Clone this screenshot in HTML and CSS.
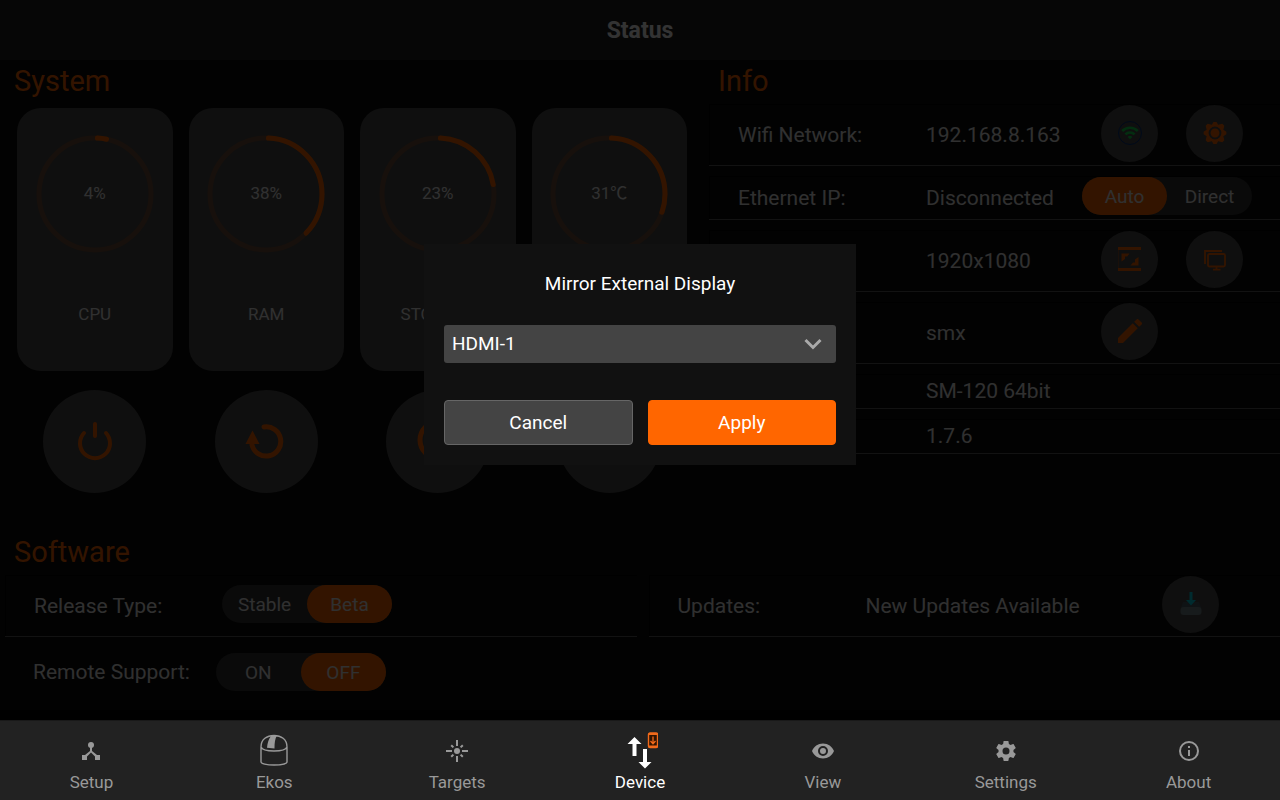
FILE: index.html
```html
<!DOCTYPE html>
<html lang="en">
<head>
<meta charset="utf-8">
<meta name="viewport" content="width=device-width, initial-scale=1">
<title>Status</title>
<link rel="stylesheet" href="styles.css">
</head>
<body>
<div class="app">
  <div class="screen">
    <header class="titlebar"><h1>Status</h1></header>
    <main class="content">
      <div class="overview">
        <section class="system">
          <h2>System</h2>
          <div class="gauges">
            <article class="gauge">
              <div class="dial">
                <svg viewBox="0 0 118 118" aria-hidden="true"><circle class="track" cx="59" cy="59" r="56"/><circle class="value" cx="59" cy="59" r="56" pathLength="100" stroke-dasharray="2.6 200"/></svg>
                <span>4%</span>
              </div>
              <h3>CPU</h3>
            </article>
            <article class="gauge">
              <div class="dial">
                <svg viewBox="0 0 118 118" aria-hidden="true"><circle class="track" cx="59" cy="59" r="56"/><circle class="value" cx="59" cy="59" r="56" pathLength="100" stroke-dasharray="36.6 200"/></svg>
                <span>38%</span>
              </div>
              <h3>RAM</h3>
            </article>
            <article class="gauge">
              <div class="dial">
                <svg viewBox="0 0 118 118" aria-hidden="true"><circle class="track" cx="59" cy="59" r="56"/><circle class="value" cx="59" cy="59" r="56" pathLength="100" stroke-dasharray="21.6 200"/></svg>
                <span>23%</span>
              </div>
              <h3>STORAGE</h3>
            </article>
            <article class="gauge">
              <div class="dial">
                <svg viewBox="0 0 118 118" aria-hidden="true"><circle class="track" cx="59" cy="59" r="56"/><circle class="value" cx="59" cy="59" r="56" pathLength="100" stroke-dasharray="29.6 200"/></svg>
                <span>31℃</span>
              </div>
            </article>
          </div>
          <div class="power">
            <button class="round large" aria-label="Power off">
              <svg viewBox="0 0 44 44" width="44" height="44" fill="none" stroke="currentColor" stroke-width="4" stroke-linecap="round"><path d="M22 4v12"/><path d="M11 13a15 15 0 1 0 22 0"/></svg>
            </button>
            <button class="round large" aria-label="Restart">
              <svg viewBox="0 0 44 44" width="44" height="44"><path d="M20 7a14.600 14.600 0 1 1-12 18" fill="none" stroke="currentColor" stroke-width="5" stroke-linecap="round"/><path d="M8.500 10.500L1.500 24h14z" fill="currentColor"/></svg>
            </button>
            <button class="round large" aria-label="Reload">
              <svg viewBox="0 0 44 44" width="44" height="44" fill="none" stroke="currentColor" stroke-width="5"><circle cx="22" cy="20" r="18"/></svg>
            </button>
            <button class="round large" aria-label="More"></button>
          </div>
        </section>

        <section class="info">
          <h2>Info</h2>
          <div class="rows">
            <div class="row tall">
              <span class="label">Wifi Network:</span><span class="text">192.168.8.163</span>
              <div class="actions">
                <button class="round" aria-label="Wifi">
                  <svg viewBox="0 0 26 26" width="26" height="26" fill="none"><circle cx="13" cy="13" r="11.500" stroke="#003080"/><g stroke="#10e050" stroke-width="2.600"><path d="M5.200 11a11 11 0 0 1 15.600 0"/><path d="M8.400 14.400a6.500 6.500 0 0 1 9.200 0"/></g><path d="M10.600 16.900a3.400 3.400 0 0 1 4.800 0L13 19.300z" fill="#10e050"/></svg>
                </button>
                <button class="round" aria-label="Hotspot">
                  <svg viewBox="0 0 24 24" width="26" height="26"><path fill="currentColor" d="M10.600 1.800h2.800l1.500 2.500 3.900-.9 1.800 1.800-.9 3.900 2.800 1.700v2.400l-2.800 1.700.9 3.900-1.800 1.800-3.900-.9-1.500 2.500h-2.800l-1.500-2.500-3.900.9-1.800-1.800.9-3.900-2.800-1.700v-2.400l2.800-1.700-.9-3.900 1.800-1.800 3.900.9z"/><circle cx="12" cy="12" r="5" fill="none" stroke="#4b4b4b" stroke-width="1.800"/></svg>
                </button>
              </div>
            </div>
            <div class="row medium">
              <span class="label">Ethernet IP:</span><span class="text">Disconnected</span>
              <div class="switch" role="radiogroup" aria-label="Ethernet mode">
                <label><input type="radio" name="eth" checked><span>Auto</span></label>
                <label><input type="radio" name="eth"><span>Direct</span></label>
              </div>
            </div>
            <div class="row tall">
              <span class="label"></span><span class="text">1920x1080</span>
              <div class="actions">
                <button class="round" aria-label="Change resolution">
                  <svg viewBox="0 0 24 24" width="24" height="24" fill="currentColor"><path d="M0 0h23v3H0zM0 21h23v3H0z"/><path d="M.500 3v18" stroke="currentColor" stroke-opacity=".3"/><path d="M3.500 6.500h8L9.200 9.500H7v2.500L3.500 14.500zM20.500 10v8.500h-8L15 15.500h2v-3z"/></svg>
                </button>
                <button class="round" aria-label="Mirror display">
                  <svg viewBox="0 0 24 24" width="24" height="24" fill="none" stroke="currentColor" stroke-width="1.800"><path d="M19 4H2v13"/><rect x="5" y="7" width="17" height="12.500" rx="1.500"/><path d="M13.500 19.500v3M10 22.600h7.500"/></svg>
                </button>
              </div>
            </div>
            <div class="row tall">
              <span class="label"></span><span class="text">smx</span>
              <div class="actions">
                <button class="round" aria-label="Edit">
                  <svg viewBox="3 3 18 18" width="24" height="24" fill="currentColor"><path d="M3 17.250V21h3.750L17.810 9.940l-3.750-3.750zM20.710 7.040a1 1 0 0 0 0-1.410l-2.340-2.340a1 1 0 0 0-1.410 0l-1.830 1.830 3.750 3.750z"/></svg>
                </button>
              </div>
            </div>
            <div class="row"><span class="label"></span><span class="text">SM-120 64bit</span></div>
            <div class="row"><span class="label"></span><span class="text">1.7.6</span></div>
          </div>
        </section>
      </div>

      <section class="software">
        <h2>Software</h2>
        <div class="pair">
          <div class="row tall">
            <span class="label">Release Type:</span>
            <div class="switch" role="radiogroup" aria-label="Release type">
              <label><input type="radio" name="release"><span>Stable</span></label>
              <label><input type="radio" name="release" checked><span>Beta</span></label>
            </div>
          </div>
          <div class="row tall updates">
            <span class="label">Updates:</span><span class="text">New Updates Available</span>
            <button class="round" aria-label="Download updates">
              <svg viewBox="0 0 24 24" width="24" height="24"><path d="M4 10h16l2 6H2z" fill="#4b5f68"/><rect x="1.500" y="15" width="21" height="8" rx="3" fill="#74858a"/><path d="M10.500 0h3v8H17l-5 5.500L7 8h3.500z" fill="#00d5e8"/></svg>
            </button>
          </div>
        </div>
        <div class="support">
          <span class="label">Remote Support:</span>
          <div class="switch" role="radiogroup" aria-label="Remote support">
            <label><input type="radio" name="support"><span>ON</span></label>
            <label><input type="radio" name="support" checked><span>OFF</span></label>
          </div>
        </div>
      </section>
    </main>

    <div class="scrim">
      <form class="dialog" role="dialog" aria-labelledby="dialog-title">
        <h2 id="dialog-title">Mirror External Display</h2>
        <div class="select">
          <select aria-labelledby="dialog-title"><option>HDMI-1</option></select>
          <svg viewBox="0 0 18 12" width="18" height="12" fill="none" stroke="#aaa" stroke-width="3" aria-hidden="true"><path d="M1.500 2L9 9.500 16.500 2"/></svg>
        </div>
        <div class="buttons">
          <button type="button">Cancel</button>
          <button type="button" class="primary">Apply</button>
        </div>
      </form>
    </div>
  </div>

  <nav class="tabs">
    <a href="#setup">
      <svg viewBox="0 0 24 24" width="24" height="24" fill="currentColor"><circle cx="12" cy="6" r="3"/><path d="M11 8h2v4l5 4h3v5h-5v-3.600l-4-3.900-4 3.900V21H3v-5h3l5-4z"/></svg>
      <span>Setup</span></a>
    <a href="#ekos">
      <svg viewBox="0 0 32 34" width="32" height="34" fill="none" stroke="currentColor" stroke-width="1.400"><path d="M3 13C3 5 9 1.500 16 1.500S29 5 29 13v15c0 1.500-5.500 3-13 3S3 29.500 3 28zM3 13c1 2.700 6 4 13 4s12-1.300 13-4"/><path d="M13 2l6-.4c-2 3-2.500 7-2.500 13l-7.500-.8C9.500 9 10.500 5 13 2z" fill="currentColor" stroke="none"/></svg>
      <span>Ekos</span></a>
    <a href="#targets">
      <svg viewBox="0 0 24 24" width="24" height="24" fill="none" stroke="currentColor" stroke-width="2"><circle cx="12" cy="12" r="3" fill="currentColor" stroke="none"/><path d="M12 1v6M12 17v6M1 12h6M17 12h6M6.200 6.200l2.200 2.200M15.600 15.600l2.200 2.200M17.800 6.200l-2.200 2.200M8.400 15.600l-2.200 2.200"/></svg>
      <span>Targets</span></a>
    <a href="#device" class="active" aria-current="page">
      <svg viewBox="0 0 36 38" width="36" height="38"><path fill="currentColor" d="M12.500 5L19.500 12h-5v12h-4V12h-5zM21 17h4v13h4.500L23 36.500 16.500 30H21z"/><rect x="26.500" y="1" width="9" height="14.500" rx="1.500" fill="#331400" stroke="#f26a1b" stroke-width="1.400"/><path d="M26.500 2h9M26.500 14.500h9" stroke="#f26a1b" stroke-width="2"/><path d="M31 4.500v7M28.500 9l2.500 2.700L33.500 9" fill="none" stroke="#f26a1b" stroke-width="1.300"/></svg>
      <span>Device</span></a>
    <a href="#view">
      <svg viewBox="0 0 24 24" width="24" height="24" fill="currentColor"><path d="M12 4.500C7 4.500 2.730 7.610 1 12c1.730 4.390 6 7.500 11 7.500s9.270-3.110 11-7.500c-1.730-4.390-6-7.500-11-7.500zM12 17a5 5 0 1 1 0-10 5 5 0 0 1 0 10zm0-8a3 3 0 1 0 0 6 3 3 0 0 0 0-6z"/></svg>
      <span>View</span></a>
    <a href="#settings">
      <svg viewBox="0 0 24 24" width="24" height="24" fill="currentColor"><path d="M19.430 12.980c.04-.32.07-.64.07-.98s-.03-.66-.07-.98l2.110-1.650c.19-.15.24-.42.12-.64l-2-3.460c-.12-.22-.39-.3-.61-.22l-2.490 1c-.52-.4-1.080-.73-1.690-.98l-.38-2.650C14.460 2.180 14.250 2 14 2h-4c-.25 0-.46.18-.49.42l-.38 2.650c-.61.25-1.170.59-1.690.98l-2.490-1c-.23-.09-.49 0-.61.22l-2 3.460c-.13.22-.07.49.12.64l2.110 1.650c-.04.32-.07.65-.07.98s.03.66.07.98l-2.110 1.650c-.19.15-.24.42-.12.64l2 3.460c.12.22.39.3.61.22l2.490-1c.52.4 1.080.73 1.690.98l.38 2.650c.03.24.24.42.49.42h4c.25 0 .46-.18.49-.42l.38-2.650c.61-.25 1.170-.59 1.690-.98l2.490 1c.23.09.49 0 .61-.22l2-3.460c.12-.22.07-.49-.12-.64zM12 15.500a3.500 3.500 0 1 1 0-7 3.500 3.500 0 0 1 0 7z"/></svg>
      <span>Settings</span></a>
    <a href="#about">
      <svg viewBox="0 0 24 24" width="24" height="24" fill="currentColor"><path d="M11 17h2v-6h-2zm1-15a10 10 0 1 0 0 20 10 10 0 0 0 0-20zm0 18a8 8 0 1 1 0-16 8 8 0 0 1 0 16zM11 9h2V7h-2z"/></svg>
      <span>About</span></a>
  </nav>
</div>
</body>
</html>
```
FILE: styles.css
```css
* { box-sizing: border-box; }

body {
  margin: 0;
  background: #000;
  color: #fff;
  font-family: Roboto, "Noto Sans CJK SC", sans-serif;
}

h1, h2, h3 { margin: 0; font-weight: 400; }

button {
  margin: 0;
  padding: 0;
  border: 0;
  color: inherit;
  font: inherit;
}

svg { display: block; }

.app {
  display: flex;
  flex-direction: column;
  min-height: 100vh;
}

.screen {
  position: relative;
  flex: 1;
  margin-bottom: 10px;
  background: #0a0a0a;
}

.titlebar {
  height: 60px;
  background: #222;
  text-align: center;
}

.titlebar h1 {
  font-size: 23px;
  font-weight: 700;
  line-height: 62px;
}

.content h2 {
  height: 44px;
  padding-left: 14px;
  color: #f60;
  font-size: 29px;
  line-height: 42px;
}

.overview {
  display: grid;
  grid-template-columns: 709fr 571fr;
  padding-bottom: 38px;
}

.gauges, .power {
  display: grid;
  grid-template-columns: repeat(4, 1fr);
  gap: 16px;
  padding: 4px 22px 0 17px;
}

.gauge {
  display: flex;
  flex-direction: column;
  align-items: center;
  gap: 49px;
  height: 263px;
  padding-top: 27px;
  border-radius: 24px;
  background: #4b4b4b;
  font-size: 17px;
}

.dial { display: grid; place-items: center; }
.dial > * { grid-area: 1 / 1; }
.dial svg { width: 118px; }
.dial span { height: 22px; line-height: 20px; }
.dial circle { fill: none; stroke-width: 5; }
.dial .track { stroke: #74513c; }

.dial .value {
  stroke: #f60;
  stroke-linecap: round;
  stroke-dashoffset: -0.7;
  transform: rotate(-90deg);
  transform-origin: center;
}

.gauge h3 { font-size: 17px; line-height: 24px; }
.gauge h3, .dial span { color: #eee; }

.power { padding-top: 19px; justify-items: center; }

.round {
  display: grid;
  place-items: center;
  width: 57px;
  height: 57px;
  border-radius: 50%;
  background: #4b4b4b;
  color: #f60;
}

.round.large { width: 103px; height: 103px; }

.info h2 { padding-left: 9px; }
.rows { display: grid; gap: 10px; }

.row {
  display: flex;
  align-items: center;
  height: 35px;
  padding-left: 29px;
  border-bottom: 1px solid #5a5a5a;
  box-shadow: inset 1px 1px #000;
}

.row.medium { height: 44px; }
.row.tall { height: 62px; }

.row, .support {
  color: #eee;
  font-size: 21px;
}

.row .label { width: 188px; }
.row .text { flex: 1; }

.row .round { margin-bottom: 3px; }
.row .switch { margin-bottom: 3px; }

.actions {
  display: grid;
  grid-template-columns: 85px 85px;
  justify-items: center;
  margin-right: 23px;
}

.switch {
  display: grid;
  grid-template-columns: 1fr 1fr;
  width: 170px;
  height: 38px;
  border-radius: 19px;
  background: #333;
  font-size: 19px;
}

.row.medium .switch { margin-right: 28px; }

.switch label { display: grid; }
.switch label > * { grid-area: 1 / 1; }
.switch input { margin: 0; appearance: none; border-radius: 19px; }
.switch input:checked { background: #f60; }
.switch span { z-index: 1; align-self: center; text-align: center; }

.pair {
  display: grid;
  grid-template-columns: 1fr 1fr;
  gap: 12px;
  padding-left: 5px;
}

.updates .round { margin-right: 61px; }

.support {
  display: flex;
  align-items: center;
  gap: 26px;
  margin-top: 16px;
  padding-left: 33px;
}

.scrim {
  position: absolute;
  inset: 0;
  z-index: 2;
  display: grid;
  place-items: center;
  padding-bottom: 2px;
  background: rgba(0, 0, 0, 0.8);
}

.dialog {
  width: 432px;
  padding: 20px;
  background: #111;
  font-size: 19px;
}

.dialog h2 {
  font-size: 19px;
  line-height: 40px;
  text-align: center;
}

.select {
  display: grid;
  align-items: center;
  margin: 21px 0 37px;
}

.select > * { grid-area: 1 / 1; }

.select select {
  width: 100%;
  height: 38px;
  padding: 0 8px;
  appearance: none;
  border: 0;
  border-radius: 3px;
  background: #444;
  color: #fff;
  font: inherit;
}

.select svg {
  justify-self: end;
  margin-right: 14px;
  pointer-events: none;
}

.buttons {
  display: grid;
  grid-template-columns: 1fr 1fr;
  gap: 15px;
}

.buttons button {
  height: 45px;
  border: 1px solid #666;
  border-radius: 4px;
  background: #444;
}

.buttons .primary { border-color: #f60; background: #f60; }

.tabs {
  display: grid;
  grid-template-columns: repeat(7, 1fr);
  height: 80px;
  border-top: 1px solid #191919;
  background: #222;
}

.tabs a {
  display: grid;
  grid-template-rows: 40px 22px;
  align-content: start;
  place-items: center;
  padding-top: 10px;
  color: #999;
  font-size: 17px;
  line-height: 22px;
  text-decoration: none;
}

.tabs .active { color: #fff; }
```
